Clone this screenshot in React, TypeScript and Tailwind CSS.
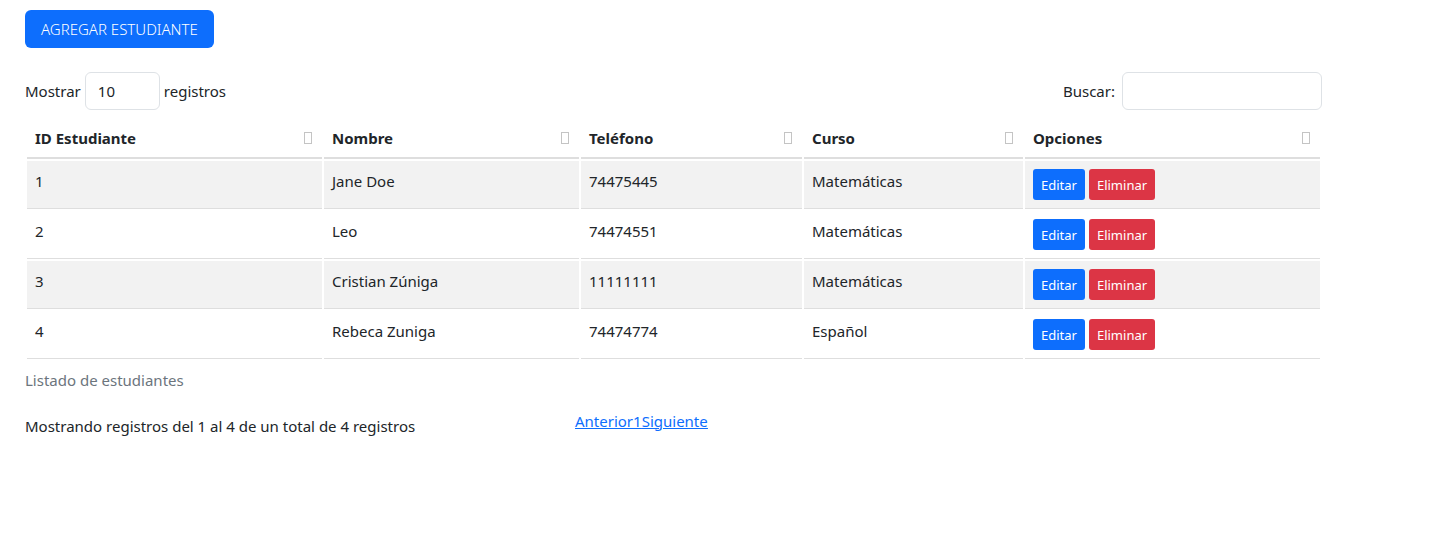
import { FC } from "react";

type Student = {
  id: number;
  name: string;
  phone: string;
  course: string;
};

const students: Student[] = [
  { id: 1, name: "Jane Doe", phone: "74475445", course: "Matemáticas" },
  { id: 2, name: "Leo", phone: "74474551", course: "Matemáticas" },
  { id: 3, name: "Cristian Zúniga", phone: "11111111", course: "Matemáticas" },
  { id: 4, name: "Rebeca Zuniga", phone: "74474774", course: "Español" },
];

const columns = [
  { label: "ID Estudiante", width: "w-[295px]" },
  { label: "Nombre", width: "w-[255px]" },
  { label: "Teléfono", width: "w-[221px]" },
  { label: "Curso", width: "w-[219px]" },
  { label: "Opciones", width: "w-[295px]" },
];

// the little "missing glyph" box the sort arrows render as
const SortBox = () => (
  <span className="absolute right-[10px] top-[12px] h-[12px] w-[8px] border border-[#c4c4c4]" />
);

const App: FC = () => {
  return (
    <div className="min-h-screen bg-white px-[25px] pt-[10px] font-['Noto_Sans',sans-serif] text-[15px] text-[#212529]">
      <button className="h-[38px] rounded-[6px] bg-[#0d6efd] px-[16px] text-[15px] font-light text-white">
        AGREGAR ESTUDIANTE
      </button>

      <div className="mt-[24px] flex w-[1297px] items-center justify-between">
        <div className="flex items-center gap-[4px]">
          <span>Mostrar</span>
          <div className="flex h-[38px] w-[75px] items-center rounded-[6px] border border-[#dee2e6] pl-[12px]">
            10
          </div>
          <span>registros</span>
        </div>
        <div className="flex items-center gap-[7px]">
          <span>Buscar:</span>
          <input className="h-[38px] w-[200px] rounded-[6px] border border-[#dee2e6] outline-none" />
        </div>
      </div>

      <table className="mt-[8px] w-[1297px] table-fixed border-separate border-spacing-[2px]">
        <caption className="caption-bottom pt-[8px] text-left text-[#6c757d]">
          Listado de estudiantes
        </caption>
        <thead>
          <tr>
            {columns.map((c) => (
              <th
                key={c.label}
                className={`relative h-[39px] border-b-2 border-[#dedede] px-[8px] text-left align-middle font-bold ${c.width}`}
              >
                {c.label}
                <SortBox />
              </th>
            ))}
          </tr>
        </thead>
        <tbody>
          {students.map((s, i) => {
            const bg = i % 2 === 0 ? "bg-[#f2f2f2]" : "bg-white";
            const cell = `h-[48px] border-b border-[#dedede] px-[8px] pt-[8px] align-top leading-[24px] ${bg}`;
            return (
              <tr key={s.id}>
                <td className={cell}>{s.id}</td>
                <td className={cell}>{s.name}</td>
                <td className={cell}>{s.phone}</td>
                <td className={cell}>{s.course}</td>
                <td className={cell}>
                  <div className="flex gap-[4px]">
                    <button className="h-[31px] rounded-[3px] bg-[#0d6efd] px-[8px] text-[13px] text-white">
                      Editar
                    </button>
                    <button className="h-[31px] rounded-[3px] bg-[#dc3545] px-[8px] text-[13px] text-white">
                      Eliminar
                    </button>
                  </div>
                </td>
              </tr>
            );
          })}
        </tbody>
      </table>

      <div className="mt-[18px] flex">
        <div className="w-[550px] pt-[5px]">
          Mostrando registros del 1 al 4 de un total de 4 registros
        </div>
        <div className="flex text-[#0d6efd] underline">
          <a href="#">Anterior</a>
          <a href="#">1</a>
          <a href="#">Siguiente</a>
        </div>
      </div>
    </div>
  );
};

export default App;
